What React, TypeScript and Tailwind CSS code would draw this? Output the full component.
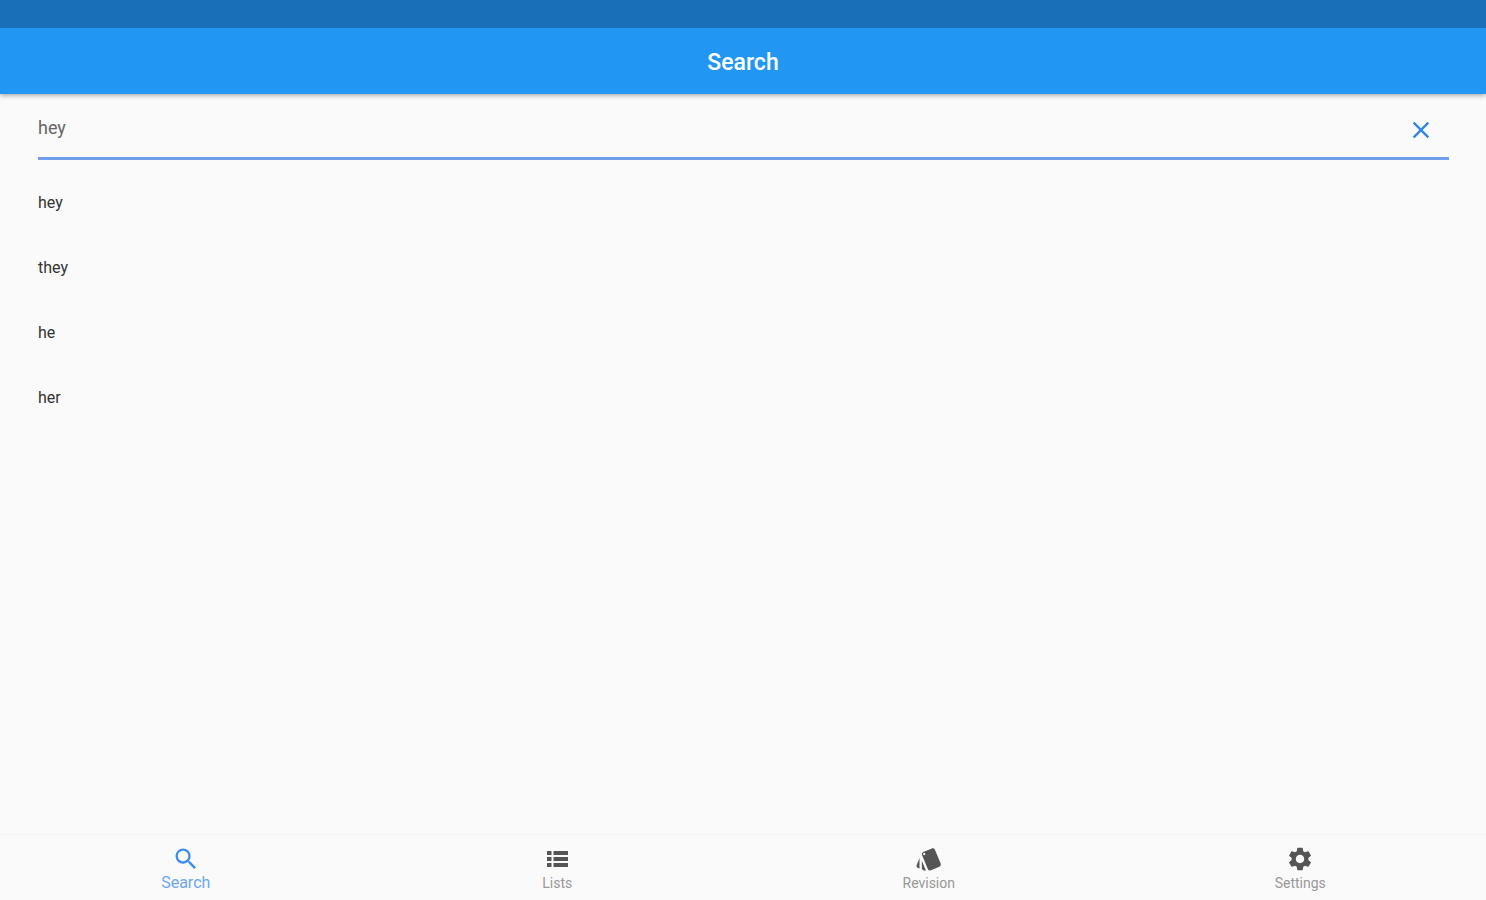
import { useState } from "react";
import type { ReactNode } from "react";
import { MdClose, MdSearch, MdSettings, MdStyle } from "react-icons/md";

interface Tab {
  name: string;
  icon: ReactNode;
}

const words = ["hey", "they", "he", "her"];

const ListIcon = () => (
  <svg viewBox="0 0 28 28" className="size-7" fill="currentColor">
    <path d="M4 6h4.500v4H4zM10.500 6H25v4H10.500zM4 12h4.500v4H4zM10.500 12H25v4H10.500zM4 18h4.500v4H4zM10.500 18H25v4H10.500z" />
  </svg>
);

const tabs: Tab[] = [
  { name: "Search", icon: <MdSearch className="size-7" /> },
  { name: "Lists", icon: <ListIcon /> },
  { name: "Revision", icon: <MdStyle className="size-7" /> },
  { name: "Settings", icon: <MdSettings className="size-7" /> },
];

const App = () => {
  const [query, setQuery] = useState("hey");
  const [active, setActive] = useState("Search");

  return (
    <div className="flex min-h-screen flex-col bg-[#fafafa] font-['Roboto',sans-serif]">
      <header className="border-t-28 border-[#1a70b8] bg-[#2196f3] shadow-[0_1px_5px_rgba(0,0,0,0.4)]">
        <h1 className="flex h-[66px] items-center justify-center pt-1 text-[23px] font-medium text-white">
          Search
        </h1>
      </header>
      <main className="flex-1 pt-2 pr-[37px] pl-[38px]">
        <div className="flex h-[58px] items-center border-b-3 border-[#709fec] pr-3.5">
          <input
            type="text"
            aria-label="Search words"
            value={query}
            onChange={(e) => setQuery(e.target.value)}
            className="min-w-0 flex-1 bg-transparent pb-1 text-[18px] text-[#666] outline-none"
          />
          <button
            type="button"
            aria-label="Clear"
            onClick={() => setQuery("")}
            className="text-[#2f86e8]"
          >
            <MdClose className="size-7" />
          </button>
        </div>
        <ul className="pt-2.5">
          {words.map((word) => (
            <li
              key={word}
              className="flex h-[65px] items-center text-base text-[#333]"
            >
              {word}
            </li>
          ))}
        </ul>
      </main>
      <nav className="flex h-[66px] border-t border-[#f3f3f3]">
        {tabs.map((tab) => (
          <button
            key={tab.name}
            type="button"
            onClick={() => setActive(tab.name)}
            className={`flex flex-1 flex-col items-center pt-2.5 ${
              active === tab.name ? "text-[#3b8cf0]" : "text-[#555]"
            }`}
          >
            {tab.icon}
            <span
              className={
                active === tab.name
                  ? "text-base leading-5 text-[#6ea6f2]"
                  : "text-sm leading-5 text-[#999]"
              }
            >
              {tab.name}
            </span>
          </button>
        ))}
      </nav>
    </div>
  );
};

export default App;
